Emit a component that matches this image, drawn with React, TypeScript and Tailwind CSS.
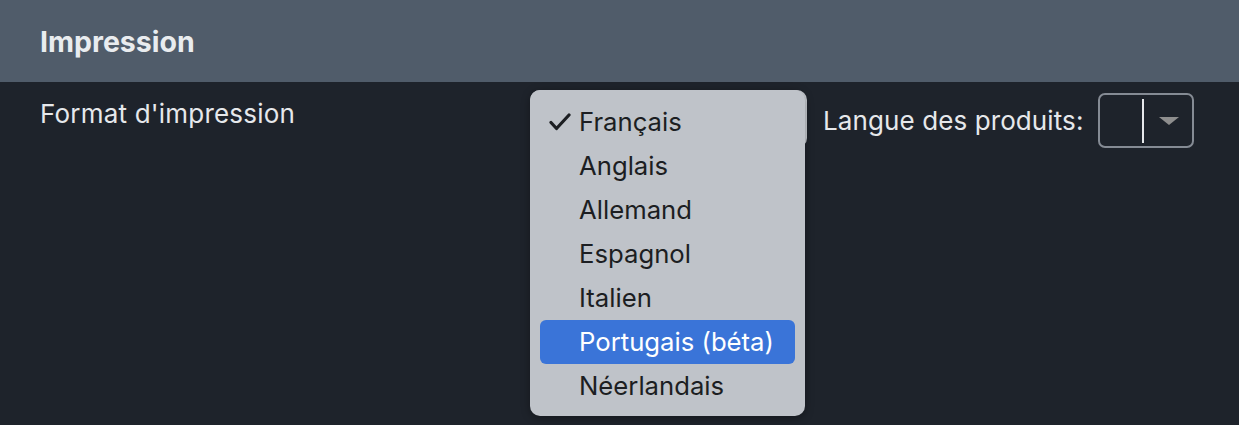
import React from "react";

const items = ["Français", "Anglais", "Allemand", "Espagnol", "Italien", "Portugais (béta)", "Néerlandais"];

export default function App() {
  return (
    <div className="w-[1239px] h-[425px] bg-[#1e232b] overflow-hidden" style={{ fontFamily: "Inter, 'Noto Sans', sans-serif" }}>
      <div className="h-[82px] bg-[#505c6a] flex items-center pl-[40px]">
        <span className="text-[28.5px] font-bold text-[#e9ecef] tracking-[0px] leading-none pt-[2px]">Impression</span>
      </div>
      <div className="flex items-start pl-[40px] pt-[8px]">
        <div className="w-[490px] pt-[9px] text-[26px] leading-[30px] text-[#e6e8eb] tracking-[0.2px]">Format d'impression</div>
        <div className="relative w-[277px] h-[58px] rounded-[10px] bg-[#c9cdd2]">
          <div className="absolute left-0 top-0 w-[275px] h-[326px] rounded-[10px] bg-[#bfc3c9] shadow-[0_2px_8px_rgba(0,0,0,0.35)] px-[10px] pt-[10px] pb-[8px] z-10">
            {items.map((it, i) => {
              const hl = i === 5;
              return (
                <div
                  key={it}
                  className={
                    "relative h-[44px] flex items-center pl-[39px] rounded-[6px] text-[25.7px] " +
                    (hl ? "bg-[#3a74d8] text-white" : "text-[#1c1e22]")
                  }
                >
                  {i === 0 && (
                    <svg className="absolute left-[9px] top-[13px]" width="22" height="18" viewBox="0 0 22 18">
                      <path d="M2 9.5 L7.5 15.5 L20 2" fill="none" stroke="#1c1e22" strokeWidth="3.2" strokeLinecap="round" strokeLinejoin="round" />
                    </svg>
                  )}
                  <span>{it}</span>
                </div>
              );
            })}
          </div>
        </div>
        <div className="flex items-center ml-[16px] mt-[3px]">
          <span className="text-[26px] text-[#e6e8eb] tracking-[0.1px]">Langue des produits:</span>
          <div className="ml-[14px] w-[96px] h-[55px] rounded-[7px] border-2 border-[#858b94] flex items-center">
            <div className="ml-[42px] w-[2px] h-[44px] bg-[#e6e8eb]" />
            <svg className="ml-[14px]" width="22" height="10" viewBox="0 0 22 10">
              <path d="M1 1 L21 1 L11 9 Z" fill="#8e8e8e" />
            </svg>
          </div>
        </div>
      </div>
    </div>
  );
}
